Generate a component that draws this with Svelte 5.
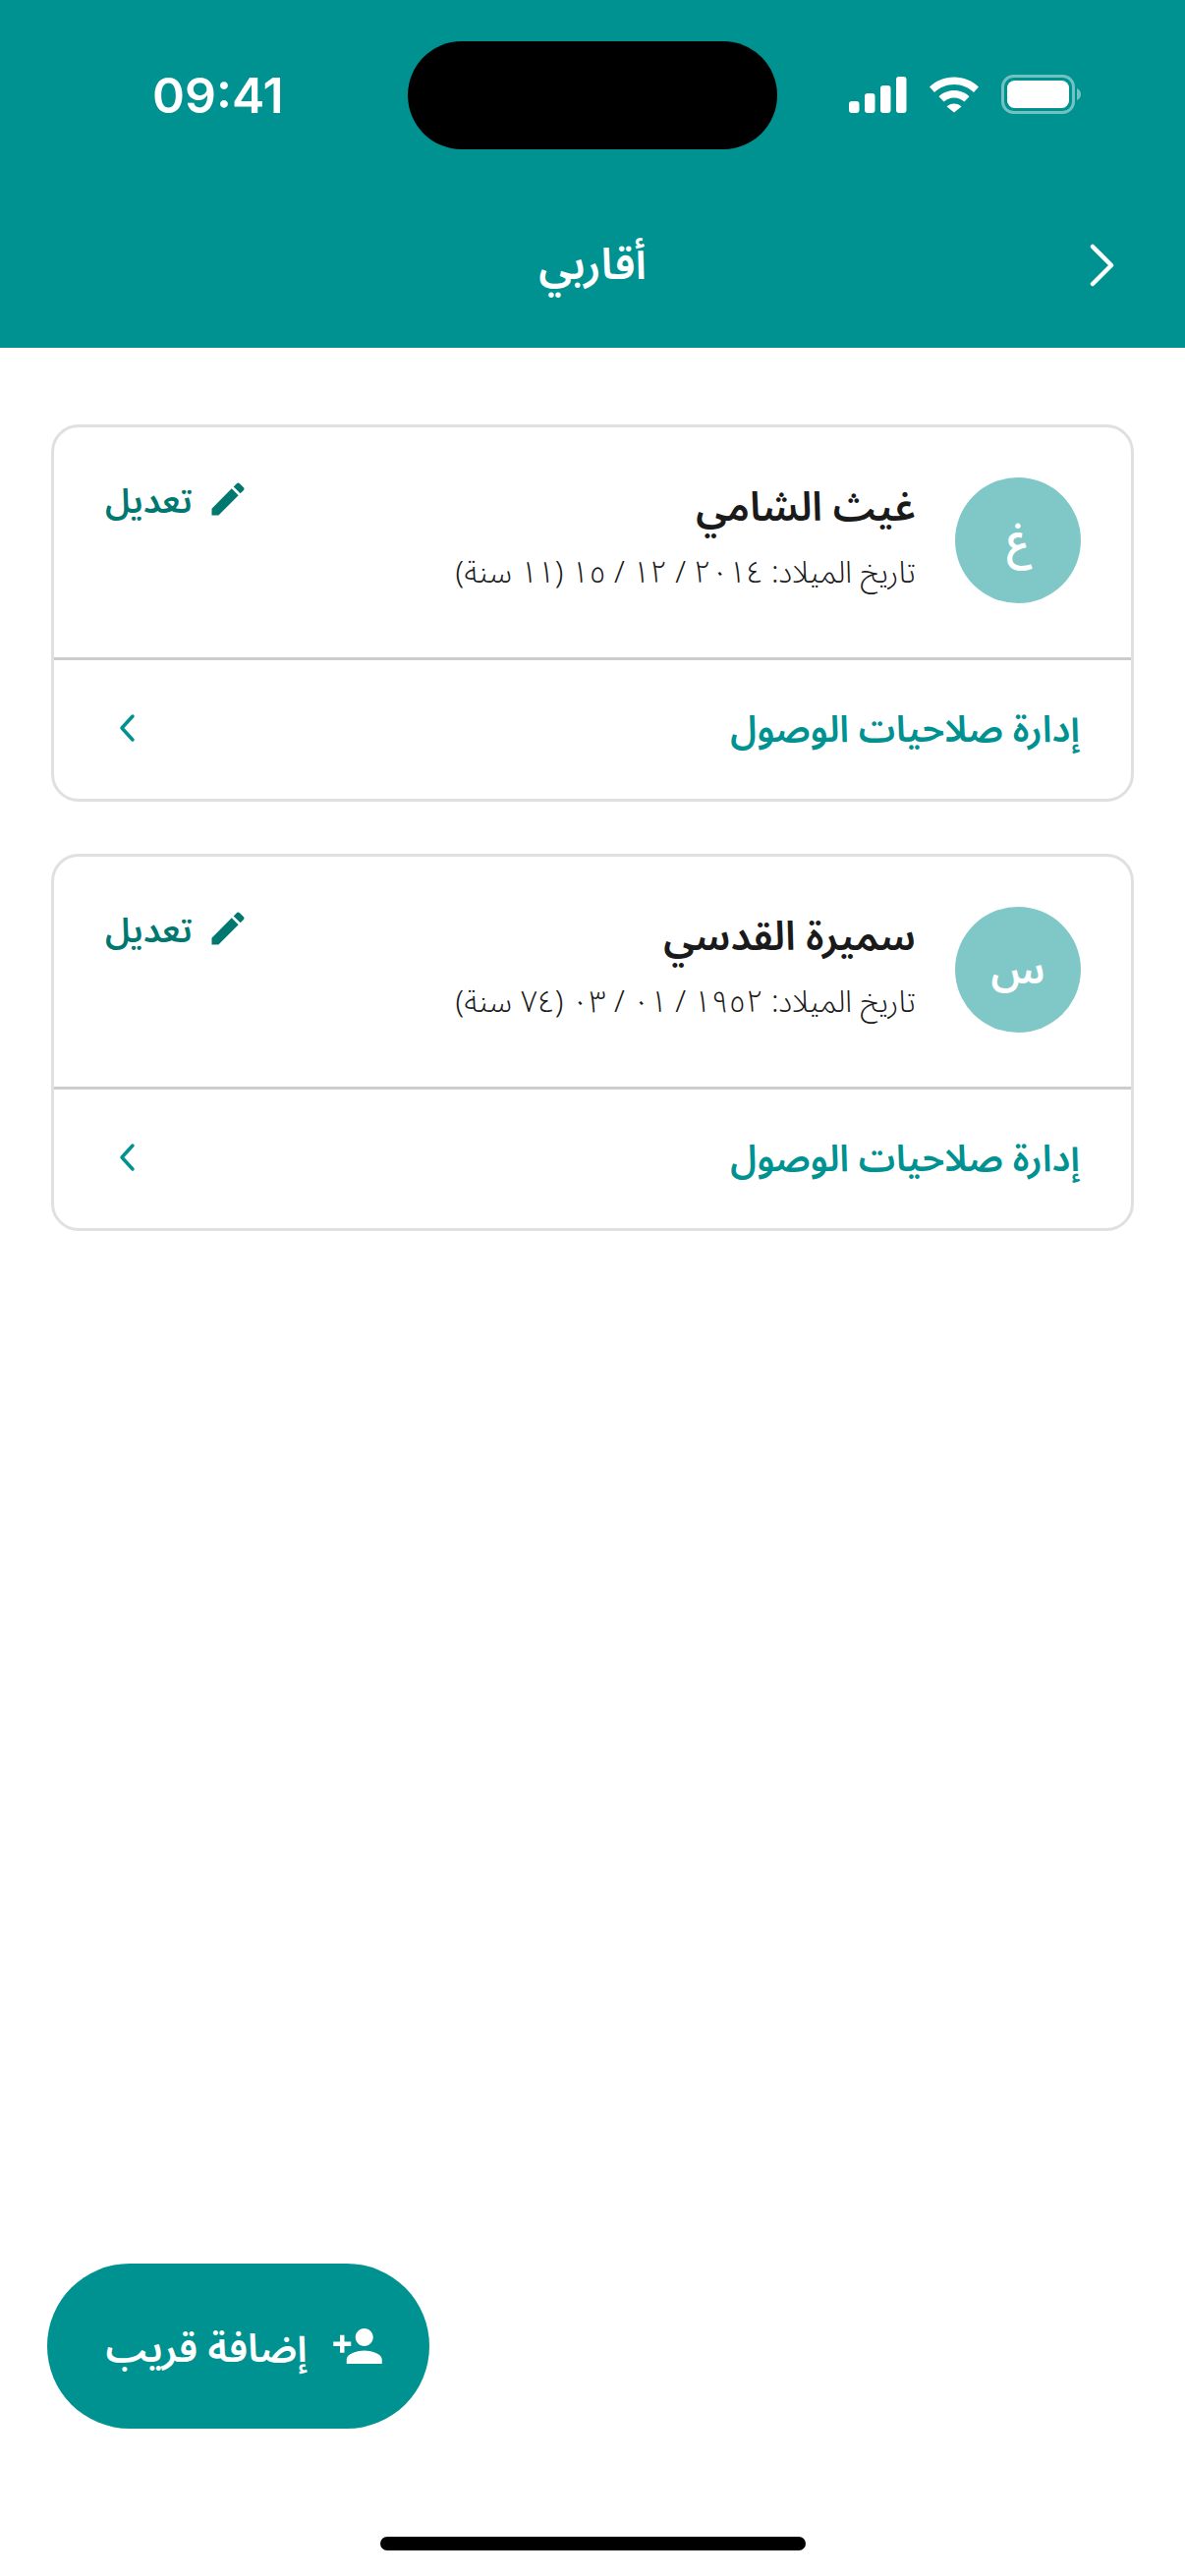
<script>
  const people = [
    { initial: 'غ', name: 'غيث الشامي', dob: 'تاريخ الميلاد: ٢٠١٤ / ١٢ / ١٥ (١١ سنة)' },
    { initial: 'س', name: 'سميرة القدسي', dob: 'تاريخ الميلاد: ١٩٥٢ / ٠١ / ٠٣ (٧٤ سنة)' }
  ];
</script>

<div class="page" dir="rtl">
  <header class="header">
    <div class="status" dir="ltr">
      <span class="time">09:41</span>
      <div class="island"></div>
      <div class="status-icons">
        <svg width="59" height="37" viewBox="0 0 59 37" fill="#fff">
          <rect x="0" y="25" width="10.500" height="12" rx="3"/>
          <rect x="16" y="17" width="10.500" height="20" rx="3"/>
          <rect x="32" y="9" width="10.500" height="28" rx="3"/>
          <rect x="48" y="0" width="10.500" height="37" rx="3"/>
        </svg>
        <svg width="52" height="37" viewBox="0 0 52 36" fill="#fff">
          <path d="M26 0C16 0 7.500 3.800 1 10l5 5.500C11.200 10.600 18.200 7.500 26 7.500s14.800 3.100 20 8l5-5.500C44.500 3.800 36 0 26 0z"/>
          <path d="M26 13.500c-6 0-11.500 2.300-15.500 6.200l5 5.400c2.700-2.600 6.400-4.200 10.500-4.200s7.800 1.600 10.500 4.200l5-5.400c-4-3.900-9.500-6.200-15.500-6.200z"/>
          <path d="M26 27c-2.900 0-5.500 1.100-7.500 2.900L26 36l7.500-6.100C31.500 28.100 28.900 27 26 27z"/>
        </svg>
        <svg width="82" height="40" viewBox="0 0 82 40">
          <rect x="1.500" y="1.500" width="72" height="37" rx="11" fill="none" stroke="#fff" stroke-opacity="0.45" stroke-width="3"/>
          <rect x="6" y="6" width="63" height="28" rx="7.500" fill="#fff"/>
          <path d="M77 14c2.500.8 4 3.200 4 6s-1.500 5.200-4 6z" fill="#fff" fill-opacity="0.45"/>
        </svg>
      </div>
    </div>
    <div class="nav">
      <svg class="back" width="28" height="44" viewBox="0 0 28 44" fill="none" stroke="#fff" stroke-width="4.500" stroke-linecap="round" stroke-linejoin="round">
        <path d="M4 3l19 19L4 41"/>
      </svg>
      <h1 class="title">أقاربي</h1>
    </div>
  </header>

  <main class="list">
    {#each people as p}
      <section class="card">
        <div class="info">
          <div class="avatar">{p.initial}</div>
          <div class="details">
            <div class="name">{p.name}</div>
            <div class="dob">{p.dob}</div>
          </div>
          <div class="edit">
            <svg width="44" height="44" viewBox="0 0 24 24" fill="#00776f">
              <path d="M3 17.250V21h3.750L17.810 9.940l-3.750-3.750L3 17.250zM20.710 7.040c.39-.39.39-1.020 0-1.410l-2.340-2.340c-.39-.39-1.020-.39-1.410 0l-1.830 1.830 3.750 3.750 1.830-1.830z"/>
            </svg>
            <span class="edit-label">تعديل</span>
          </div>
        </div>
        <div class="access">
          <span>إدارة صلاحيات الوصول</span>
          <svg class="access-chevron" width="20" height="30" viewBox="0 0 20 30" fill="none" stroke="#009191" stroke-width="3.500" stroke-linecap="round" stroke-linejoin="round">
            <path d="M15 3L4 15l11 12"/>
          </svg>
        </div>
      </section>
    {/each}
  </main>

  <button class="fab">
    <svg width="54" height="54" viewBox="0 0 24 24" fill="#fff">
      <path d="M15 12c2.210 0 4-1.790 4-4s-1.790-4-4-4-4 1.790-4 4 1.790 4 4 4zm-9-2V7H4v3H1v2h3v3h2v-3h3v-2H6zm9 4c-2.670 0-8 1.340-8 4v2h16v-2c0-2.660-5.330-4-8-4z"/>
    </svg>
    <span class="fab-label">إضافة قريب</span>
  </button>

  <div class="home"></div>
</div>

<style>
  :global(body) { margin: 0; background: #fff; }
  .page {
    width: 1206px;
    height: 2622px;
    display: flex;
    flex-direction: column;
    font-family: "Noto Sans Arabic", "DejaVu Sans", sans-serif;
    overflow: hidden;
  }
  .header { background: #009191; height: 354px; display: flex; flex-direction: column; flex: none; }
  .status {
    height: 192px;
    position: relative;
    display: flex;
    justify-content: space-between;
    align-items: center;
    padding: 0 105px 0 155px;
    box-sizing: border-box;
  }
  .time { font-family: Inter, sans-serif; font-weight: 600; font-size: 50px; color: #fff; line-height: 1; margin-top: 2px; }
  .island {
    position: absolute;
    left: 415px;
    top: 42px;
    width: 376px;
    height: 110px;
    border-radius: 55px;
    background: #000;
  }
  .status-icons { display: flex; align-items: center; gap: 22px; }
  .nav { position: relative; flex: 1; display: flex; align-items: flex-start; justify-content: center; padding-top: 50px; }
  .title { margin: 0; color: #fff; font-size: 44px; font-weight: 600; line-height: 1.3; }
  .back { position: absolute; right: 70px; top: 56px; }
  .list { padding: 78px 52px 0; display: flex; flex-direction: column; gap: 53px; }
  .card { border: 3px solid #e0e0e0; border-radius: 28px; background: #fff; }
  .info {
    height: 237px;
    box-sizing: border-box;
    display: flex;
    align-items: flex-start;
    padding: 51px 51px 0 52px;
    border-bottom: 3px solid #cccccc;
    gap: 40px;
  }
  .avatar {
    width: 128px;
    height: 128px;
    border-radius: 50%;
    background: #80c8c8;
    color: #fff;
    font-size: 42px;
    font-weight: 600;
    display: flex;
    align-items: center;
    justify-content: center;
    flex: none;
  }
  .details { flex: 1; padding-top: 6px; }
  .name { font-size: 41px; font-weight: 600; color: #1a1a1a; line-height: 50px; }
  .dob { font-size: 31px; font-weight: 300; color: #1a1a1a; line-height: 40px; margin-top: 21px; }
  .edit { display: flex; align-items: flex-start; gap: 14px; color: #00776f; font-size: 35px; font-weight: 600; line-height: 44px; }
  .edit-label { padding-top: 3px; }
  .access {
    height: 141px;
    box-sizing: border-box;
    display: flex;
    align-items: center;
    justify-content: space-between;
    padding: 0 52px 0 65px;
    color: #009191;
    font-size: 37.500px;
    font-weight: 600;
  }
  .access-chevron { margin-bottom: 4px; }
  .fab {
    margin-top: auto;
    align-self: flex-end;
    margin-left: 48px;
    width: 389px;
    height: 168px;
    padding: 0 0 0 13px;
    border: 0;
    border-radius: 84px;
    background: #009191;
    color: #fff;
    font: inherit;
    font-size: 40px;
    font-weight: 600;
    display: flex;
    align-items: center;
    justify-content: center;
    gap: 24px;
  }
  .fab-label { padding-top: 6px; }
  .home {
    width: 433px;
    height: 14px;
    border-radius: 7px;
    background: #000;
    align-self: center;
    margin: 110px 0 26px;
    flex: none;
  }
</style>
